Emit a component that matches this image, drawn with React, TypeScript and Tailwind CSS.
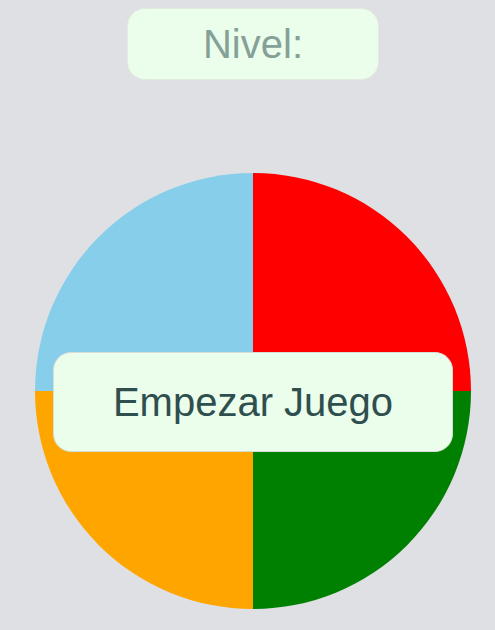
export default function App() {
  return (
    <main
      className="min-h-screen w-full bg-[#dfe0e4] pl-[11px] pt-2 flex flex-col items-center"
      style={{ fontFamily: '"Liberation Sans", Arial, sans-serif' }}
    >
      {/* Level indicator */}
      <div className="w-[252px] h-[72px] rounded-[18px] bg-[#ebfdeb] border border-[#e2ebe2] flex items-center justify-center">
        <span className="text-[40px] leading-none text-[#85a097]">Nivel:</span>
      </div>

      {/* Simon board */}
      <div className="relative mt-[93px] w-[436px] h-[436px]">
        <div className="w-full h-full rounded-full overflow-hidden grid grid-cols-2 grid-rows-2">
          <div className="bg-[#87ceeb]" />
          <div className="bg-[#ff0000]" />
          <div className="bg-[#ffa500]" />
          <div className="bg-[#008000]" />
        </div>

        <button className="absolute left-[18px] top-[179px] w-[400px] h-[100px] rounded-[18px] bg-[#ebfdeb] border border-[#d6ddd6] flex items-center justify-center">
          <span className="text-[40px] leading-none text-[#2f4f4f]">Empezar Juego</span>
        </button>
      </div>
    </main>
  );
}
